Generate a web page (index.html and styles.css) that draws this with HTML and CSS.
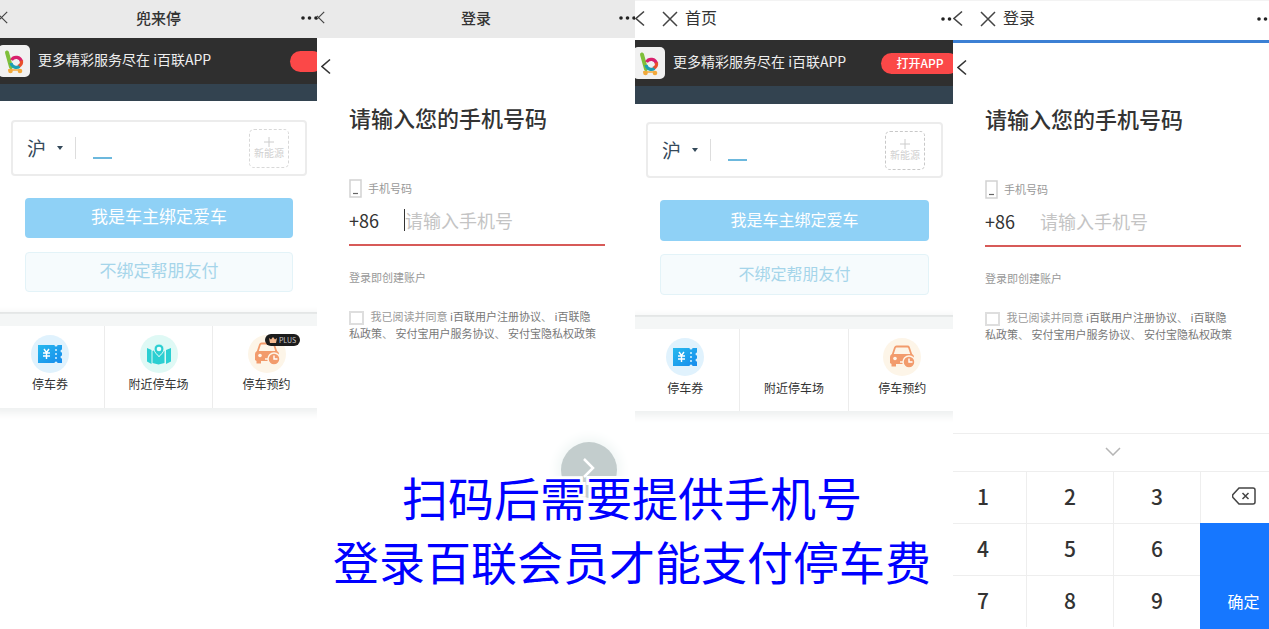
FILE: index.html
```html
<!DOCTYPE html>
<html lang="zh-CN">
<head>
  <meta charset="UTF-8">
  <meta name="viewport" content="width=device-width, initial-scale=1.0">
  <title>扫码停车缴费</title>
  <link rel="stylesheet" href="styles.css">
</head>
<body>
  <!-- 公用图标 -->
  <svg class="symbols" aria-hidden="true">
    <symbol id="i-close" viewBox="0 0 16 16"><path d="M1 1l14 14M15 1L1 15" fill="none" stroke="currentColor" stroke-width="1.5"/></symbol>
    <symbol id="i-back" viewBox="0 0 10 16"><path d="M9 1L1 8l8 7" fill="none" stroke="currentColor" stroke-width="1.6"/></symbol>
    <symbol id="i-more" viewBox="0 0 24 16"><g fill="#222"><circle cx="10" cy="8" r="1.8"/><circle cx="16.5" cy="8" r="1.8"/><circle cx="23" cy="8" r="1.8"/></g></symbol>
    <symbol id="i-plus" viewBox="0 0 10 10"><path d="M5 0v10M0 5h10" stroke="#ccc" stroke-width="1"/></symbol>
    <symbol id="i-logo" viewBox="0 0 32 32">
      <path d="M9 7.500L13 22" stroke="#7fbf3a" stroke-width="4" stroke-linecap="round" fill="none"/>
      <path d="M13.500 15a5.500 5.500 0 0 1 10 1.500" stroke="#d8206c" stroke-width="3.200" fill="none"/>
      <path d="M23.500 15.500a5.500 5.500 0 0 1-3.500 6" stroke="#e8502c" stroke-width="3.200" fill="none"/>
      <path d="M13 18a5.600 5.600 0 0 0 8.500 3.500" stroke="#1c9fb4" stroke-width="3.200" fill="none"/>
      <path d="M10 25h13" stroke="#f2a93b" stroke-width="1.600"/>
      <circle cx="12.500" cy="26" r="2.300" fill="#f2a93b"/><circle cx="22" cy="26" r="2.300" fill="#f2a93b"/>
    </symbol>
    <symbol id="i-coupon" viewBox="0 0 38 38">
      <defs><linearGradient id="g-blue" x1="0" y1="0" x2="1" y2="1"><stop offset="0" stop-color="#27b9ee"/><stop offset="1" stop-color="#168bec"/></linearGradient></defs>
      <circle cx="19" cy="19" r="19" fill="#e0f2fd"/>
      <path d="M7 10h16.500a1.500 1.500 0 0 0 3 0H31v4.500a1.500 1.500 0 0 0 0 3v3a1.500 1.500 0 0 0 0 3V28h-4.500a1.500 1.500 0 0 0-3 0H7z" fill="url(#g-blue)"/>
      <path d="M13 14l2.500 3.500L18 14M15.500 17.500V24M12 18h7M12 21h7" stroke="#fff" stroke-width="1.400" fill="none"/>
      <path d="M25 14v2M25 18v2M25 22v2" stroke="#d9f2ff" stroke-width="1.500"/>
    </symbol>
    <symbol id="i-map" viewBox="0 0 38 38">
      <circle cx="19" cy="19" r="19" fill="#dff9f5"/>
      <path d="M7 13l4.500 2v14L7 26.500zM12.500 16l2.500-1c.6 3 2.400 5.400 4 7 1.600-1.600 3.400-4 4-7l1.500 1v12l-6 1.500-6-1.500zM26 15l5-2v13.500L26 29z" fill="#2bcfd2"/>
      <path d="M19 9a5 5 0 0 1 5 5c0 3-3 5.600-5 7.500-2-1.900-5-4.500-5-7.500a5 5 0 0 1 5-5z" fill="#2bcfd2" stroke="#dff9f5" stroke-width="1"/>
      <circle cx="19" cy="14" r="2.300" fill="#e8fffc"/>
    </symbol>
    <symbol id="i-car" viewBox="0 0 38 38">
      <circle cx="19" cy="19" r="19" fill="#fdf5e8"/>
      <path d="M9.500 17l2.500-7.500q.4-1 1.500-1h11q1 0 1.500 1l2.500 7.500" fill="none" stroke="#f29b6c" stroke-width="1.800"/>
      <path d="M9 16h20q2 1 2 3v7H13v2.500H8.500V26L7 25v-6q0-2 2-3z" fill="#f29b6c"/>
      <circle cx="12" cy="20.500" r="1.800" fill="#fff5ea"/><path d="M17 24h4" stroke="#fff5ea" stroke-width="1.500"/>
      <circle cx="26" cy="24" r="6" fill="#f29b6c" stroke="#fdf5e8" stroke-width="1.500"/>
      <path d="M26 20.500V24h3.500" fill="none" stroke="#fff" stroke-width="1.400"/>
    </symbol>
    <symbol id="i-phone" viewBox="0 0 13 19"><rect x="1" y="1" width="11" height="17" fill="none" stroke="#d2d2d2" stroke-width="1.500"/><path d="M4 14.500h5" stroke="#666" stroke-width="1.200"/></symbol>
  </svg>

  <main class="shots">
    <!-- 微信:停车首页 -->
    <section class="phone">
      <header class="wx-bar">
        <button class="icon-btn" aria-label="关闭"><svg class="wx-close"><use href="#i-close"/></svg></button>
        <h2>兜来停</h2>
        <button class="icon-btn" aria-label="更多"><svg class="more"><use href="#i-more"/></svg></button>
      </header>
      <div class="banner">
        <svg class="logo"><use href="#i-logo"/></svg>
        <span>更多精彩服务尽在 i百联APP</span>
        <button class="open-app open-app-cut" aria-label="打开"></button>
      </div>
      <div class="strip"></div>
      <div class="bind">
        <div class="plate">
          <select class="province" aria-label="省份"><option>沪</option></select>
          <svg class="caret" viewBox="0 0 8 5"><path d="M1 0h6L4 4z" fill="#34495a"/></svg>
          <input class="plate-input" type="text" aria-label="车牌号">
          <button class="energy"><svg><use href="#i-plus"/></svg>新能源</button>
        </div>
        <button class="btn btn-main">我是车主绑定爱车</button>
        <button class="btn btn-sub">不绑定帮朋友付</button>
      </div>
      <nav class="tiles">
        <a href="#" class="tile"><svg><use href="#i-coupon"/></svg>停车券</a>
        <a href="#" class="tile"><svg><use href="#i-map"/></svg>附近停车场</a>
        <a href="#" class="tile"><svg><use href="#i-car"/></svg>停车预约
          <span class="plus-tag"><svg viewBox="0 0 8 6"><path d="M0 1l2 1.500L4 0l2 2.500L8 1 7 6H1z" fill="#f3b88f"/></svg>PLUS</span>
        </a>
      </nav>
    </section>

    <!-- 微信:登录 -->
    <section class="phone">
      <header class="wx-bar">
        <button class="icon-btn" aria-label="关闭"><svg class="wx-close"><use href="#i-close"/></svg></button>
        <h2>登录</h2>
        <button class="icon-btn" aria-label="更多"><svg class="more"><use href="#i-more"/></svg></button>
      </header>
      <button class="icon-btn page-back" aria-label="返回"><svg><use href="#i-back"/></svg></button>
      <form class="login">
        <h1>请输入您的手机号码</h1>
        <label class="phone-label" for="tel-a"><svg><use href="#i-phone"/></svg>手机号码</label>
        <div class="tel-row">
          <span>+86</span>
          <input class="focused" id="tel-a" type="tel" placeholder="请输入手机号">
        </div>
        <p class="hint">登录即创建账户</p>
        <div class="agree">
          <input type="checkbox" id="agree-a">
          <label for="agree-a">我已阅读并同意</label> <a href="#">i百联用户注册协议</a>、 <a href="#">i百联隐<br>私政策</a>、 <a href="#">安付宝用户服务协议</a>、 <a href="#">安付宝隐私权政策</a>
        </div>
      </form>
      <button class="next" aria-label="下一步"><svg viewBox="0 0 12 20"><path d="M1 1l9 9-9 9" fill="none" stroke="#fff" stroke-width="2.500"/></svg></button>
    </section>

    <!-- 支付宝:停车首页 -->
    <section class="phone ali">
      <header class="ali-bar">
        <button class="icon-btn" aria-label="返回"><svg class="back"><use href="#i-back"/></svg></button>
        <button class="icon-btn" aria-label="关闭"><svg class="close"><use href="#i-close"/></svg></button>
        <h2>首页</h2>
        <button class="icon-btn" aria-label="更多"><svg class="more"><use href="#i-more"/></svg></button>
      </header>
      <div class="banner">
        <svg class="logo"><use href="#i-logo"/></svg>
        <span>更多精彩服务尽在 i百联APP</span>
        <button class="open-app">打开APP</button>
      </div>
      <div class="strip"></div>
      <div class="bind">
        <div class="plate">
          <select class="province" aria-label="省份"><option>沪</option></select>
          <svg class="caret" viewBox="0 0 8 5"><path d="M1 0h6L4 4z" fill="#34495a"/></svg>
          <input class="plate-input" type="text" aria-label="车牌号">
          <button class="energy"><svg><use href="#i-plus"/></svg>新能源</button>
        </div>
        <button class="btn btn-main">我是车主绑定爱车</button>
        <button class="btn btn-sub">不绑定帮朋友付</button>
      </div>
      <nav class="tiles">
        <a href="#" class="tile"><svg><use href="#i-coupon"/></svg>停车券</a>
        <a href="#" class="tile"><svg></svg>附近停车场</a>
        <a href="#" class="tile"><svg><use href="#i-car"/></svg>停车预约</a>
      </nav>
    </section>

    <!-- 支付宝:登录 + 数字键盘 -->
    <section class="phone ali">
      <header class="ali-bar loading">
        <button class="icon-btn" aria-label="返回"><svg class="back"><use href="#i-back"/></svg></button>
        <button class="icon-btn" aria-label="关闭"><svg class="close"><use href="#i-close"/></svg></button>
        <h2>登录</h2>
        <button class="icon-btn" aria-label="更多"><svg class="more"><use href="#i-more"/></svg></button>
      </header>
      <button class="icon-btn page-back" aria-label="返回"><svg><use href="#i-back"/></svg></button>
      <form class="login">
        <h1>请输入您的手机号码</h1>
        <label class="phone-label" for="tel-b"><svg><use href="#i-phone"/></svg>手机号码</label>
        <div class="tel-row">
          <span>+86</span>
          <input id="tel-b" type="tel" placeholder="请输入手机号">
        </div>
        <p class="hint">登录即创建账户</p>
        <div class="agree">
          <input type="checkbox" id="agree-b">
          <label for="agree-b">我已阅读并同意</label> <a href="#">i百联用户注册协议</a>、 <a href="#">i百联隐<br>私政策</a>、 <a href="#">安付宝用户服务协议</a>、 <a href="#">安付宝隐私权政策</a>
        </div>
      </form>
      <div class="keyboard">
        <button class="fold" aria-label="收起键盘"><svg viewBox="0 0 16 9"><path d="M1 1l7 7 7-7" fill="none" stroke="#b5b5b5" stroke-width="1.500"/></svg></button>
        <div class="keys">
          <button>1</button>
          <button>2</button>
          <button>3</button>
          <button class="delete" aria-label="删除"><svg viewBox="0 0 24 18"><path d="M7 1h14q2 0 2 2v12q0 2-2 2H7L1 10.500q-1-1.500 0-3z" fill="none" stroke="#444" stroke-width="1.500"/><path d="M10.500 6l6 6M16.500 6l-6 6" stroke="#444" stroke-width="1.500"/></svg></button>
          <button>4</button>
          <button>5</button>
          <button>6</button>
          <button class="confirm">确定</button>
          <button>7</button>
          <button>8</button>
          <button>9</button>
        </div>
      </div>
    </section>

    <p class="caption">扫码后需要提供手机号<br>登录百联会员才能支付停车费</p>
  </main>
</body>
</html>
```
FILE: styles.css
```css
* {
  box-sizing: border-box;
}

body {
  margin: 0;
  background: #fff;
  color: #333;
  font-family: "Noto Sans CJK SC", sans-serif;
}

button,
input,
select {
  font-family: inherit;
  border: none;
  background: none;
  padding: 0;
  margin: 0;
  border-radius: 0;
  outline: none;
}

button {
  cursor: pointer;
}

a {
  color: inherit;
  text-decoration: none;
}

h1, h2, p {
  margin: 0;
}

.symbols {
  position: absolute;
  width: 0;
  height: 0;
}

.icon-btn {
  display: flex;
  color: #444;
}

/* === 四屏并排 === */
.shots {
  position: relative;
  display: grid;
  grid-template-columns: 317fr 318fr 318fr 316fr;
  height: 100vh;
  overflow: hidden;
}

.phone {
  position: relative;
  display: flex;
  flex-direction: column;
  min-width: 0;
  overflow: hidden;
}

/* === 顶部栏 === */
.wx-bar {
  display: grid;
  grid-template-columns: 24px 1fr 24px;
  align-items: center;
  height: 38px;
  padding-bottom: 3px;
  flex-shrink: 0;
  background: #eaeaea;
}

.wx-bar h2 {
  font-size: 15px;
  line-height: 22px;
  font-weight: 500;
  text-align: center;
}

.wx-close {
  width: 13px;
  height: 13px;
  margin-left: -5px;
}

.more {
  width: 24px;
  height: 16px;
}

.ali-bar {
  display: flex;
  align-items: center;
  height: 40px;
  padding-bottom: 4px;
  flex-shrink: 0;
  border-top: 1px solid #f3f3f3;
}

.ali-bar .back {
  width: 10px;
  height: 17px;
}

.ali-bar .close {
  width: 16px;
  height: 16px;
  margin: 0 7px 0 17px;
}

.ali-bar h2 {
  flex: 1;
  padding-bottom: 3px;
  font-size: 16px;
  line-height: 24px;
  font-weight: 400;
}

.ali-bar .more {
  margin-right: -4px;
}

.ali-bar.loading {
  height: 43px;
  border-bottom: 3px solid #3c80d4;
}

/* === 下载横幅 === */
.banner {
  display: flex;
  align-items: center;
  height: 46px;
  flex-shrink: 0;
  background: #2f2f2f;
  color: #eee;
  font-size: 14px;
  line-height: 20px;
  white-space: nowrap;
}

.logo {
  width: 32px;
  height: 32px;
  margin: 0 8px 0 -2px;
  border-radius: 5px;
  background: #f1f1f1;
  flex-shrink: 0;
}

.banner span {
  flex: 1;
  padding-bottom: 5px;
}

.open-app {
  width: 78px;
  height: 21px;
  margin-right: -6px;
  border-radius: 11px;
  background: #fb4848;
  color: #fff;
  font-size: 12px;
  line-height: 20px;
  font-weight: 500;
}

.open-app-cut {
  width: 33px;
}

.strip {
  height: 17px;
  flex-shrink: 0;
  background: #334350;
}

/* === 车牌绑定 === */
.bind {
  display: flex;
  flex-direction: column;
  padding: 19px 10px 20px 11px;
  border-bottom: 2px solid #dcdfdf;
}

.plate {
  display: flex;
  align-items: center;
  height: 56px;
  padding: 0 16px 0 14px;
  margin-bottom: 22px;
  border: 2px solid #ececec;
  border-radius: 4px;
}

.province {
  width: 20px;
  height: 28px;
  padding-bottom: 4px;
  appearance: none;
  color: #34495a;
  font-size: 19px;
}

.caret {
  width: 8px;
  height: 5px;
  margin: 0 11px 0 9px;
}

.plate-input {
  width: 37px;
  height: 22px;
  border-left: 1px solid #ddd;
  background: linear-gradient(#6cb8dd, #6cb8dd) 17px 100% / 19px 2px no-repeat;
}

.energy {
  display: flex;
  flex-direction: column;
  align-items: center;
  justify-content: center;
  width: 40px;
  height: 39px;
  margin-left: auto;
  border: 1px dashed #d8d8d8;
  border-radius: 5px;
  color: #d0d0d0;
  font-size: 10px;
  line-height: 12px;
  white-space: nowrap;
}

.energy svg {
  width: 10px;
  height: 10px;
}

.btn {
  height: 40px;
  margin: 0 14px;
  padding-bottom: 4px;
  border-radius: 4px;
  font-size: 17px;
  line-height: 24px;
}

.btn-main {
  background: #8fd1f6;
  color: #fff;
}

.btn-sub {
  margin-top: 14px;
  border: 1px solid #e3f3f8;
  background: #f6fbfd;
  color: #a5d5ea;
}

/* === 功能入口 === */
.tiles {
  display: grid;
  grid-template-columns: repeat(3, 1fr);
  margin: 0 -3px 0 -4px;
  border-top: 12px solid #f4f6f6;
  box-shadow: 0 2px 8px 3px #eef0f0;
}

.tile {
  position: relative;
  display: flex;
  flex-direction: column;
  align-items: center;
  gap: 1px;
  height: 82px;
  padding-top: 9px;
  background: #fff;
  font-size: 12px;
  line-height: 20px;
}

.tile + .tile {
  border-left: 1px solid #ececec;
}

.tile > svg {
  width: 38px;
  height: 38px;
}

.plus-tag {
  position: absolute;
  top: 8px;
  left: 52px;
  display: flex;
  align-items: center;
  justify-content: center;
  gap: 2px;
  width: 35px;
  height: 12px;
  border-radius: 6px;
  background: #1c1c1c;
  color: #ccc;
  font-size: 7px;
  line-height: 12px;
}

.plus-tag svg {
  width: 8px;
  height: 6px;
}

/* 支付宝里的页面略大一点 */
.ali .strip {
  height: 18px;
}

.ali .bind {
  padding-top: 18px;
}

.ali .energy {
  border-color: #c8c8c8;
}

.ali .btn {
  height: 41px;
  font-size: 16px;
}

.ali .btn-sub {
  margin-top: 13px;
}

.ali .tile {
  gap: 2px;
}

/* === 登录 === */
.page-back {
  width: 10px;
  margin: 20px 0 0 4px;
  color: #333;
}

.page-back svg {
  width: 10px;
  height: 17px;
}

.login {
  padding: 26px 30px 0 32px;
  font-size: 11px;
  line-height: 17px;
  color: #999;
}

.login h1 {
  font-size: 22px;
  line-height: 32px;
  font-weight: 500;
  color: #333;
  white-space: nowrap;
}

.phone-label {
  display: flex;
  align-items: center;
  gap: 6px;
  margin-top: 46px;
}

.phone-label svg {
  width: 13px;
  height: 19px;
}

.tel-row {
  display: flex;
  align-items: center;
  height: 48px;
  padding-bottom: 2px;
  border-bottom: 2px solid #d75a58;
  font-size: 18px;
  color: #333;
}

.tel-row span {
  width: 55px;
}

.tel-row input {
  flex: 1;
  min-width: 0;
  height: 22px;
  font-size: 18px;
}

.tel-row input::placeholder {
  color: #c4c4c4;
}

.tel-row .focused {
  border-left: 1px solid #333;
}

.hint {
  margin: 23px 0 22px;
}

.agree {
  white-space: nowrap;
}

.agree input {
  appearance: none;
  width: 15px;
  height: 14px;
  margin-right: 4px;
  border: 2px solid #dedede;
  vertical-align: middle;
}

.agree a {
  color: #777;
}

.ali .page-back {
  margin-top: 16px;
}

.ali .login {
  padding-right: 28px;
}

.next {
  position: absolute;
  right: 18px;
  bottom: 131px;
  width: 56px;
  height: 56px;
  border-radius: 50%;
  background: #c3cdcd;
  box-shadow: 0 0 12px 4px #f0f6f5;
}

.next svg {
  width: 12px;
  height: 20px;
}

/* === 数字键盘 === */
.keyboard {
  margin: auto -18px -50px -14px;
  border-top: 1px solid #eee;
}

.fold {
  display: block;
  width: 100%;
  height: 37px;
  padding-bottom: 4px;
}

.fold svg {
  width: 16px;
  height: 9px;
}

.keys {
  display: grid;
  grid-template-columns: repeat(4, 1fr);
  grid-template-rows: repeat(4, 52px);
}

.keys button {
  padding-bottom: 4px;
  border-top: 1px solid #eee;
  border-left: 1px solid #eee;
  color: #333;
  font-size: 21px;
  font-weight: 500;
}

.keys .delete svg {
  width: 24px;
  height: 18px;
}

.keys .confirm {
  grid-row: span 3;
  padding: 0;
  border: none;
  background: #1677ff;
  color: #fff;
  font-size: 16px;
  font-weight: 400;
}

/* === 说明文字 === */
.caption {
  position: absolute;
  left: 0;
  right: 5px;
  bottom: 37px;
  text-align: center;
  color: #00f;
  font-size: 46px;
  line-height: 64px;
  -webkit-text-stroke: 6px #fff;
  paint-order: stroke fill;
}
```
